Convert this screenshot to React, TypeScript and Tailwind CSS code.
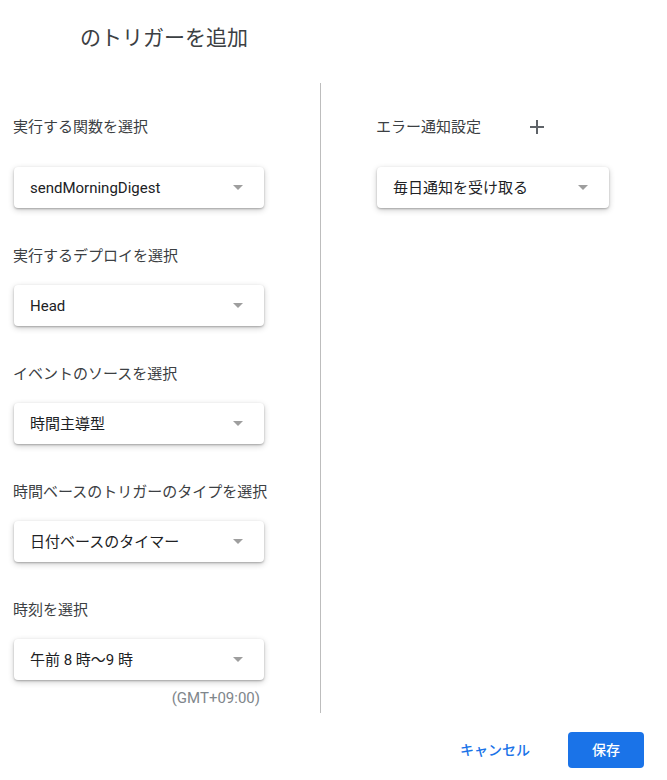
const font = { fontFamily: '"Roboto", "Noto Sans CJK JP", sans-serif' };

type Field = {
  label: string;
  value: string;
  first?: boolean;
  note?: string;
};

const fields: Field[] = [
  { label: "実行する関数を選択", value: "sendMorningDigest", first: true },
  { label: "実行するデプロイを選択", value: "Head" },
  { label: "イベントのソースを選択", value: "時間主導型" },
  { label: "時間ベースのトリガーのタイプを選択", value: "日付ベースのタイマー" },
  { label: "時刻を選択", value: "午前 8 時～9 時", note: "(GMT+09:00)" },
];

const SelectBox = ({ value, width }: { value: string; width: string }) => (
  <div
    className={`${width} h-[41px] flex items-center justify-between rounded-[4px] bg-white pl-[16px] pr-[21px] shadow-[0_1px_2px_rgba(0,0,0,0.25),0_2px_6px_rgba(0,0,0,0.2)]`}
  >
    <span className="text-[15px] leading-[20px] text-[#202124]">{value}</span>
    <span className="w-0 h-0 border-l-[5px] border-r-[5px] border-t-[5px] border-l-transparent border-r-transparent border-t-[#9e9e9e]" />
  </div>
);

const App = () => {
  return (
    <div className="w-[667px] h-[780px] bg-white flex flex-col" style={font}>
      {/* TITLE */}
      <h1 className="pt-[24px] pl-[80px] text-[21px] leading-[28px] font-normal text-[#3c4043]">
        のトリガーを追加
      </h1>

      {/* BODY */}
      <div className="mt-[31px] h-[630px] flex">
        <div className="w-[321px] border-r border-[#bdbdbd] pt-[34px] flex flex-col">
          {fields.map((f) => (
            <div key={f.label} className={f.first ? "" : "mt-[38px]"}>
              <div
                className={`pl-[13px] text-[15px] leading-[20px] text-[#3c4043] ${
                  f.first ? "mb-[30px]" : "mb-[19px]"
                }`}
              >
                {f.label}
              </div>
              <div className="pl-[14px]">
                <SelectBox value={f.value} width="w-[250px]" />
              </div>
              {f.note && (
                <div className="w-[260px] mt-[9px] text-right text-[15px] leading-[18px] text-[#80868b]">
                  {f.note}
                </div>
              )}
            </div>
          ))}
        </div>

        <div className="flex-1 pt-[34px]">
          <div className="flex items-center h-[20px] mb-[30px] pl-[55px]">
            <span className="text-[15px] leading-[20px] text-[#3c4043]">エラー通知設定</span>
            <svg
              className="ml-[48px]"
              width="16"
              height="16"
              viewBox="0 0 16 16"
              fill="none"
              stroke="#5f6368"
              strokeWidth="2"
            >
              <path d="M8 1v14M1 8h14" />
            </svg>
          </div>
          <div className="pl-[56px]">
            <SelectBox value="毎日通知を受け取る" width="w-[232px]" />
          </div>
        </div>
      </div>

      {/* FOOTER */}
      <div className="mt-[19px] flex items-center justify-end pr-[23px]">
        <button className="h-[36px] px-[8px] mr-[30px] text-[14px] font-medium text-[#1a73e8]">
          キャンセル
        </button>
        <button className="w-[76px] h-[36px] rounded-[4px] bg-[#1a73e8] text-[14px] font-medium text-white">
          保存
        </button>
      </div>
    </div>
  );
};

export default App;
